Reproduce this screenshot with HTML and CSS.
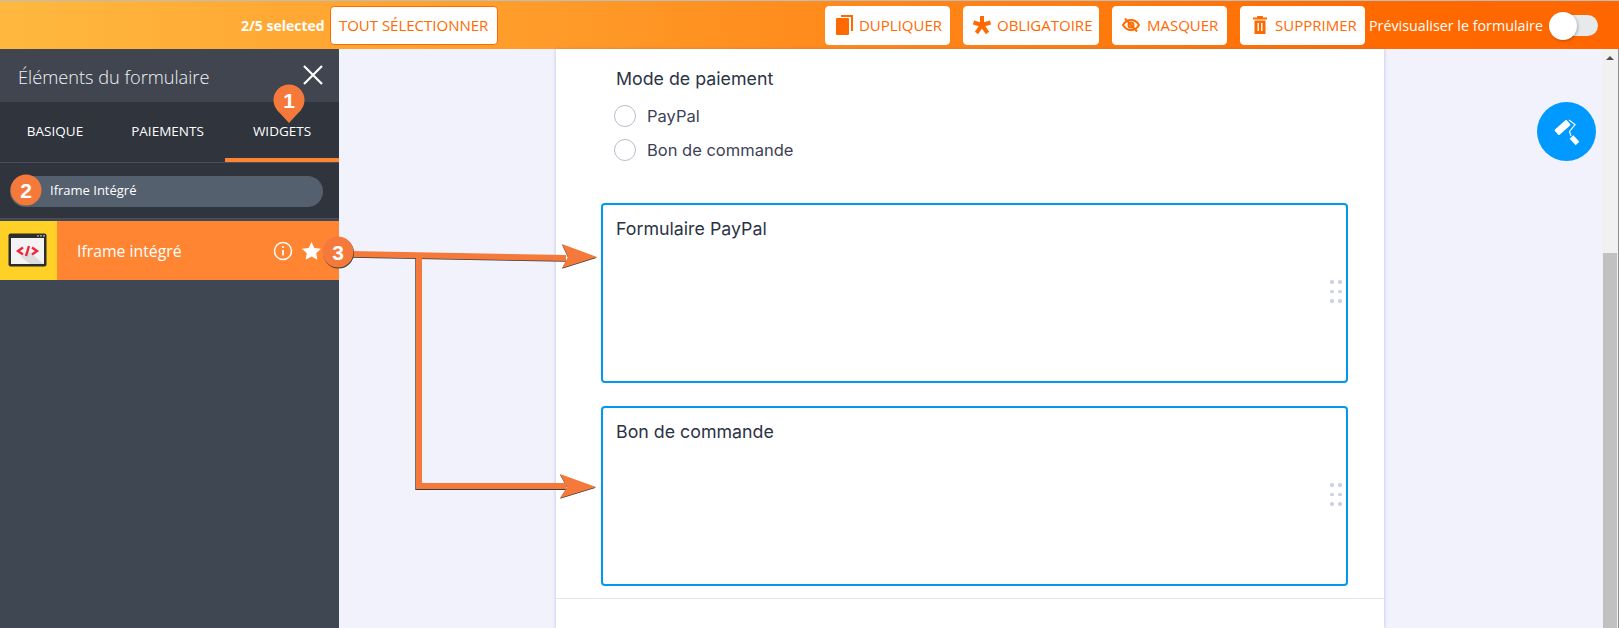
FILE: index.html
```html
<!DOCTYPE html>
<html lang="fr">

<head>
    <meta charset="UTF-8">
    <title>Éléments du formulaire</title>
    <link rel="stylesheet" href="styles.css">
</head>

<body>
    <header class="topbar">
        <div class="select-group">
            <span class="select-count">2/5 selected</span>
            <button class="bar-btn select-all">TOUT SÉLECTIONNER</button>
        </div>
        <div class="actions">
            <button class="bar-btn btn-dup">
                <svg width="17" height="20" viewBox="0 0 17 20"><path d="M5 0h12v16h-2V2H5z" fill="#ff6a00"/><rect x="0" y="3" width="13" height="17" rx="1" fill="#ff6a00"/></svg>
                DUPLIQUER
            </button>
            <button class="bar-btn btn-req">
                <svg width="18" height="18" viewBox="0 0 18 18"><g stroke="#ff6a00" stroke-width="4"><path d="M9 9V0"/><path d="M9 9L0.5 6.5"/><path d="M9 9L17.5 6.5"/><path d="M9 9L3.5 17"/><path d="M9 9L14.5 17"/></g></svg>
                OBLIGATOIRE
            </button>
            <button class="bar-btn btn-hide">
                <svg width="18" height="14" viewBox="0 0 18 14"><path d="M1 7c2-3.4 4.800-5 8-5s6 1.600 8 5c-2 3.400-4.800 5-8 5s-6-1.600-8-5z" fill="none" stroke="#ff6a00" stroke-width="2"/><circle cx="9" cy="7" r="2.500" fill="none" stroke="#ff6a00" stroke-width="2"/><path d="M3 0.500L15 13.500" stroke="#ff6a00" stroke-width="2"/></svg>
                MASQUER
            </button>
            <button class="bar-btn btn-del">
                <svg width="14" height="18" viewBox="0 0 14 18"><path d="M0 2.500h14M5 2.500V.8h4v1.700" fill="none" stroke="#ff6a00" stroke-width="1.800"/><path d="M1.500 4.500h11V18h-11z" fill="#ff6a00"/><path d="M5.200 7v8M8.800 7v8" stroke="#fff" stroke-width="1.400"/></svg>
                SUPPRIMER
            </button>
        </div>
        <span class="preview-label">Prévisualiser le formulaire</span>
        <div class="toggle"><div class="toggle-knob"></div></div>
    </header>

    <div class="workspace">
        <!-- panneau gauche -->
        <aside class="sidebar">
            <div class="side-head">
                <span class="side-title">Éléments du formulaire</span>
                <svg class="side-close" width="20" height="20" viewBox="0 0 20 20"><path d="M1 1l18 18M19 1L1 19" stroke="#fff" stroke-width="2.200"/></svg>
            </div>
            <div class="side-tabs">
                <div class="side-tab tab-basic">BASIQUE</div>
                <div class="side-tab tab-pay">PAIEMENTS</div>
                <div class="side-tab tab-widgets active">WIDGETS</div>
            </div>
            <div class="side-search">
                <div class="search-pill">Iframe Intégré</div>
            </div>
            <div class="widget-row">
                <div class="widget-thumb">
                    <svg width="39" height="35" viewBox="0 0 39 35">
                        <rect x="0.500" y="0.500" width="38" height="33" rx="2" fill="#2d2d2d"/>
                        <rect x="3" y="5" width="33" height="26" fill="#f3f3f3"/>
                        <path d="M20 18l16 13H22l-9-7z" fill="#dcdcdc"/>
                        <circle cx="30" cy="2.800" r="0.900" fill="#bbb"/><circle cx="33" cy="2.800" r="0.900" fill="#bbb"/><circle cx="36" cy="2.800" r="0.900" fill="#bbb"/>
                        <path d="M15 14.500l-5 3.500 5 3.500M24 14.500l5 3.500-5 3.500M21 13l-3 10" fill="none" stroke="#f0263f" stroke-width="2.400"/>
                    </svg>
                </div>
                <span class="widget-name">Iframe intégré</span>
                <svg class="widget-info" width="20" height="20" viewBox="0 0 20 20"><circle cx="10" cy="10" r="8.500" fill="none" stroke="#fff" stroke-width="1.500"/><path d="M10 9v5.500" stroke="#fff" stroke-width="1.800"/><circle cx="10" cy="6" r="1.100" fill="#fff"/></svg>
                <svg class="widget-star" width="19" height="18" viewBox="0 0 19 18"><path d="M9.500 0l2.900 6 6.600.8-4.800 4.500 1.200 6.500-5.900-3.200-5.900 3.200 1.200-6.500L0 6.800 6.600 6z" fill="#fff"/></svg>
            </div>
        </aside>

        <main class="canvas">
            <section class="form-card">
                <div class="field-label">Mode de paiement</div>
                <div class="radio-list">
                    <div class="radio-row"><span class="radio"></span><span class="radio-text">PayPal</span></div>
                    <div class="radio-row"><span class="radio"></span><span class="radio-text">Bon de commande</span></div>
                </div>
                <div class="embed-box box-first">
                    Formulaire PayPal
                    <div class="drag-dots"><i></i><i></i><i></i><i></i><i></i><i></i></div>
                </div>
                <div class="embed-box">
                    Bon de commande
                    <div class="drag-dots"><i></i><i></i><i></i><i></i><i></i><i></i></div>
                </div>
                <div class="card-line"></div>
            </section>
            <button class="paint-btn">
                <svg width="30" height="30" viewBox="0 0 30 30">
                    <rect x="2.500" y="7" width="16" height="7" rx="1" fill="#fff" transform="rotate(-42 10.500 10.500)"/>
                    <path d="M17 3L23 7.500L17.500 14.500L19 19" fill="none" stroke="#fff" stroke-width="1.200"/>
                    <path d="M19.500 20L25.500 26.500" stroke="#fff" stroke-width="5"/>
                </svg>
            </button>
        </main>

        <div class="scrollbar">
            <span class="scroll-up"></span>
            <div class="scroll-thumb"></div>
        </div>
    </div>

    <!-- annotations par-dessus la capture -->
    <svg class="marks" width="1619" height="628" viewBox="0 0 1619 628">
        <g class="shade">
            <path d="M350 254.800L566 258.800" stroke="#3c3c3c" stroke-width="6" fill="none"/>
            <path d="M418.300 258V487H566" stroke="#3c3c3c" stroke-width="6" fill="none"/>
            <path d="M562 244.800L597 257.800L562 268.800L568 257.800z" fill="#3c3c3c"/>
            <path d="M560 474.800L596 487.800L560 498.800L567 487.800z" fill="#3c3c3c"/>
        </g>
        <path d="M350 254L566 258" stroke="#f4793b" stroke-width="6" fill="none"/>
        <path d="M419 257V486H566" stroke="#f4793b" stroke-width="6" fill="none"/>
        <path d="M562 244L597 257L562 268L568 257z" fill="#f4793b"/>
        <path d="M560 474L596 487L560 498L567 487z" fill="#f4793b"/>

        <path d="M277 110L289 123L301 110z" fill="#f4793b"/>
        <circle cx="289" cy="100" r="15.500" fill="#f4793b"/>
        <circle cx="26" cy="190" r="15.500" fill="#f4793b"/>
        <circle cx="338.500" cy="253" r="15.500" fill="#3c3c3c"/>
        <circle cx="338" cy="252" r="15.500" fill="#f4793b"/>
        <text class="mark-num" x="289" y="107.500">1</text>
        <text class="mark-num" x="26" y="197.500">2</text>
        <text class="mark-num" x="338" y="259.500">3</text>
    </svg>
</body>

</html>
```

FILE: styles.css
```css
* {
    box-sizing: border-box;
}

html,
body {
    margin: 0;
    height: 628px;
    overflow: hidden;
}

body {
    font-family: 'Open Sans', sans-serif;
    background-color: #f1f2fb;
    display: flex;
    flex-direction: column;
    position: relative;
}

/* barre du haut */
.topbar {
    height: 49px;
    flex: none;
    display: flex;
    align-items: center;
    padding-right: 21px;
    padding-top: 1px;
    border-top: 1px solid #bdbdbd;
    background: linear-gradient(90deg, #ffb83f 0%, #ff9a28 35%, #ff6a00 85%, #ff6600 100%);
}

.select-group {
    margin-left: 241px;
    display: flex;
    align-items: center;
}

.select-count {
    color: #fff;
    font-size: 14px;
    font-weight: 700;
    margin-right: 5px;
}

.bar-btn {
    height: 39px;
    background-color: #fff;
    border: 1px solid #fff;
    border-radius: 4px;
    color: #ff6a00;
    font-family: 'Open Sans', sans-serif;
    font-size: 15px;
    font-weight: 400;
    padding: 0 0 2px;
    display: flex;
    align-items: center;
    white-space: nowrap;
}

.select-all {
    width: 168px;
    border-color: #ff6a00;
    justify-content: center;
}

.actions {
    margin-left: auto;
    display: flex;
    gap: 13px;
}

.btn-dup {
    width: 125px;
    padding-left: 10px;
    gap: 6px;
}

.btn-req {
    width: 136px;
    padding-left: 9px;
    gap: 6px;
}

.btn-hide {
    width: 115px;
    padding-left: 9px;
    gap: 7px;
}

.btn-del {
    width: 125px;
    padding-left: 12px;
    gap: 8px;
}

.preview-label {
    color: #fff;
    font-size: 14.300px;
    margin-left: 4px;
    margin-right: 6px;
    white-space: nowrap;
}

.toggle {
    width: 49px;
    height: 21px;
    background-color: #e6eaea;
    border-radius: 11px;
    display: flex;
    align-items: center;
}

.toggle-knob {
    width: 28px;
    height: 28px;
    border-radius: 50%;
    background-color: #fff;
    box-shadow: 1px 1px 3px rgba(0, 0, 0, 0.25);
    flex: none;
}

/* zone de travail */
.workspace {
    flex: 1;
    display: flex;
    min-height: 0;
}

.sidebar {
    width: 339px;
    flex: none;
    background-color: #3f4753;
}

.side-head {
    height: 53px;
    background-color: #40454f;
    display: flex;
    align-items: center;
    justify-content: space-between;
    padding: 3px 16px 0 18px;
}

.side-title {
    color: #f0f2f5;
    font-size: 18.200px;
    font-weight: 300;
}

.side-close {
    margin-top: -5px;
}

.side-tabs {
    height: 61px;
    background-color: #2f343d;
    border-bottom: 1px solid #4a505b;
    display: flex;
}

.side-tab {
    color: #fff;
    font-size: 13.500px;
    padding-top: 20px;
    text-align: center;
}

.tab-basic {
    width: 110px;
}

.tab-pay {
    width: 115px;
}

.tab-widgets {
    width: 114px;
}

.side-tab.active {
    border-bottom: 4px solid #ff8533;
}

.side-search {
    height: 56px;
    background-color: #2f343d;
    border-bottom: 1px solid #4a505b;
    padding: 13px 16px 0 10px;
}

.search-pill {
    height: 31px;
    border-radius: 16px;
    background-color: #55606f;
    color: #fff;
    font-size: 13px;
    line-height: 29px;
    padding-left: 40px;
}

.widget-row {
    height: 59px;
    margin-top: 2px;
    background-color: #ff8533;
    display: flex;
    align-items: center;
}

.widget-thumb {
    width: 57px;
    height: 100%;
    padding-right: 2px;
    background-color: #ffd026;
    display: flex;
    align-items: center;
    justify-content: center;
}

.widget-name {
    color: #fff;
    font-size: 15.800px;
    margin-left: 20px;
    width: 196px;
}

.widget-star {
    margin-left: 9px;
}

/* formulaire */
.canvas {
    flex: 1;
    position: relative;
    min-width: 0;
}

.form-card {
    width: 828px;
    height: 100%;
    margin-left: 217px;
    background-color: #fff;
    box-shadow: -1px 0 3px rgba(100, 110, 190, 0.2), 1px 0 3px rgba(100, 110, 190, 0.2);
    padding: 19px 36px 0 45px;
    font-family: 'Inter', sans-serif;
    color: #2c3345;
}

.field-label {
    font-size: 17.800px;
    line-height: 22px;
    margin-left: 15px;
}

.radio-list {
    margin-top: 15px;
    margin-left: 13px;
    display: flex;
    flex-direction: column;
    gap: 12px;
}

.radio-row {
    height: 22px;
    display: flex;
    align-items: center;
    gap: 11px;
    font-size: 16.500px;
    line-height: 20px;
    color: #3c4257;
}

.radio-text {
    margin-bottom: 1px;
}

.radio {
    width: 22px;
    height: 22px;
    border-radius: 50%;
    border: 1px solid #b8bdc9;
    background-color: #fff;
    flex: none;
}

.embed-box {
    width: 747px;
    height: 180px;
    margin-top: 23px;
    border: 2px solid #0099f0;
    border-radius: 4px;
    padding: 12px 14px 12px 13px;
    font-size: 17.800px;
    line-height: 24px;
    display: flex;
    justify-content: space-between;
}

.box-first {
    margin-top: 42px;
}

.drag-dots {
    display: grid;
    grid-template-columns: 4px 4px;
    gap: 6px 4px;
    align-self: flex-start;
    margin-top: 63px;
    margin-right: -10px;
}

.drag-dots i {
    width: 3.500px;
    height: 3.500px;
    border-radius: 50%;
    background-color: #ccd0e0;
}

.card-line {
    height: 1px;
    background-color: #e3e5f3;
    margin: 12px -36px 0 -45px;
}

.paint-btn {
    position: absolute;
    top: 53px;
    right: 6px;
    width: 59px;
    height: 59px;
    padding: 0;
    border: none;
    border-radius: 50%;
    background-color: #0099ff;
    display: flex;
    align-items: center;
    justify-content: center;
}

.scrollbar {
    width: 17px;
    flex: none;
    background-color: #f1f1f1;
    border-right: 1px solid #8f8f8f;
    padding: 7px 1px 0;
    display: flex;
    flex-direction: column;
    align-items: center;
}

.scroll-up {
    width: 0;
    height: 0;
    border-left: 4px solid transparent;
    border-right: 4px solid transparent;
    border-bottom: 4px solid #505050;
}

.scroll-thumb {
    width: 100%;
    margin-top: 193px;
    flex: 1;
    background-color: #c1c1c1;
}

/* annotations */
.marks {
    position: absolute;
    left: 0;
    top: 0;
    pointer-events: none;
}

.mark-num {
    fill: #fff;
    font-family: 'Liberation Sans', sans-serif;
    font-size: 21px;
    font-weight: 700;
    text-anchor: middle;
}
```
